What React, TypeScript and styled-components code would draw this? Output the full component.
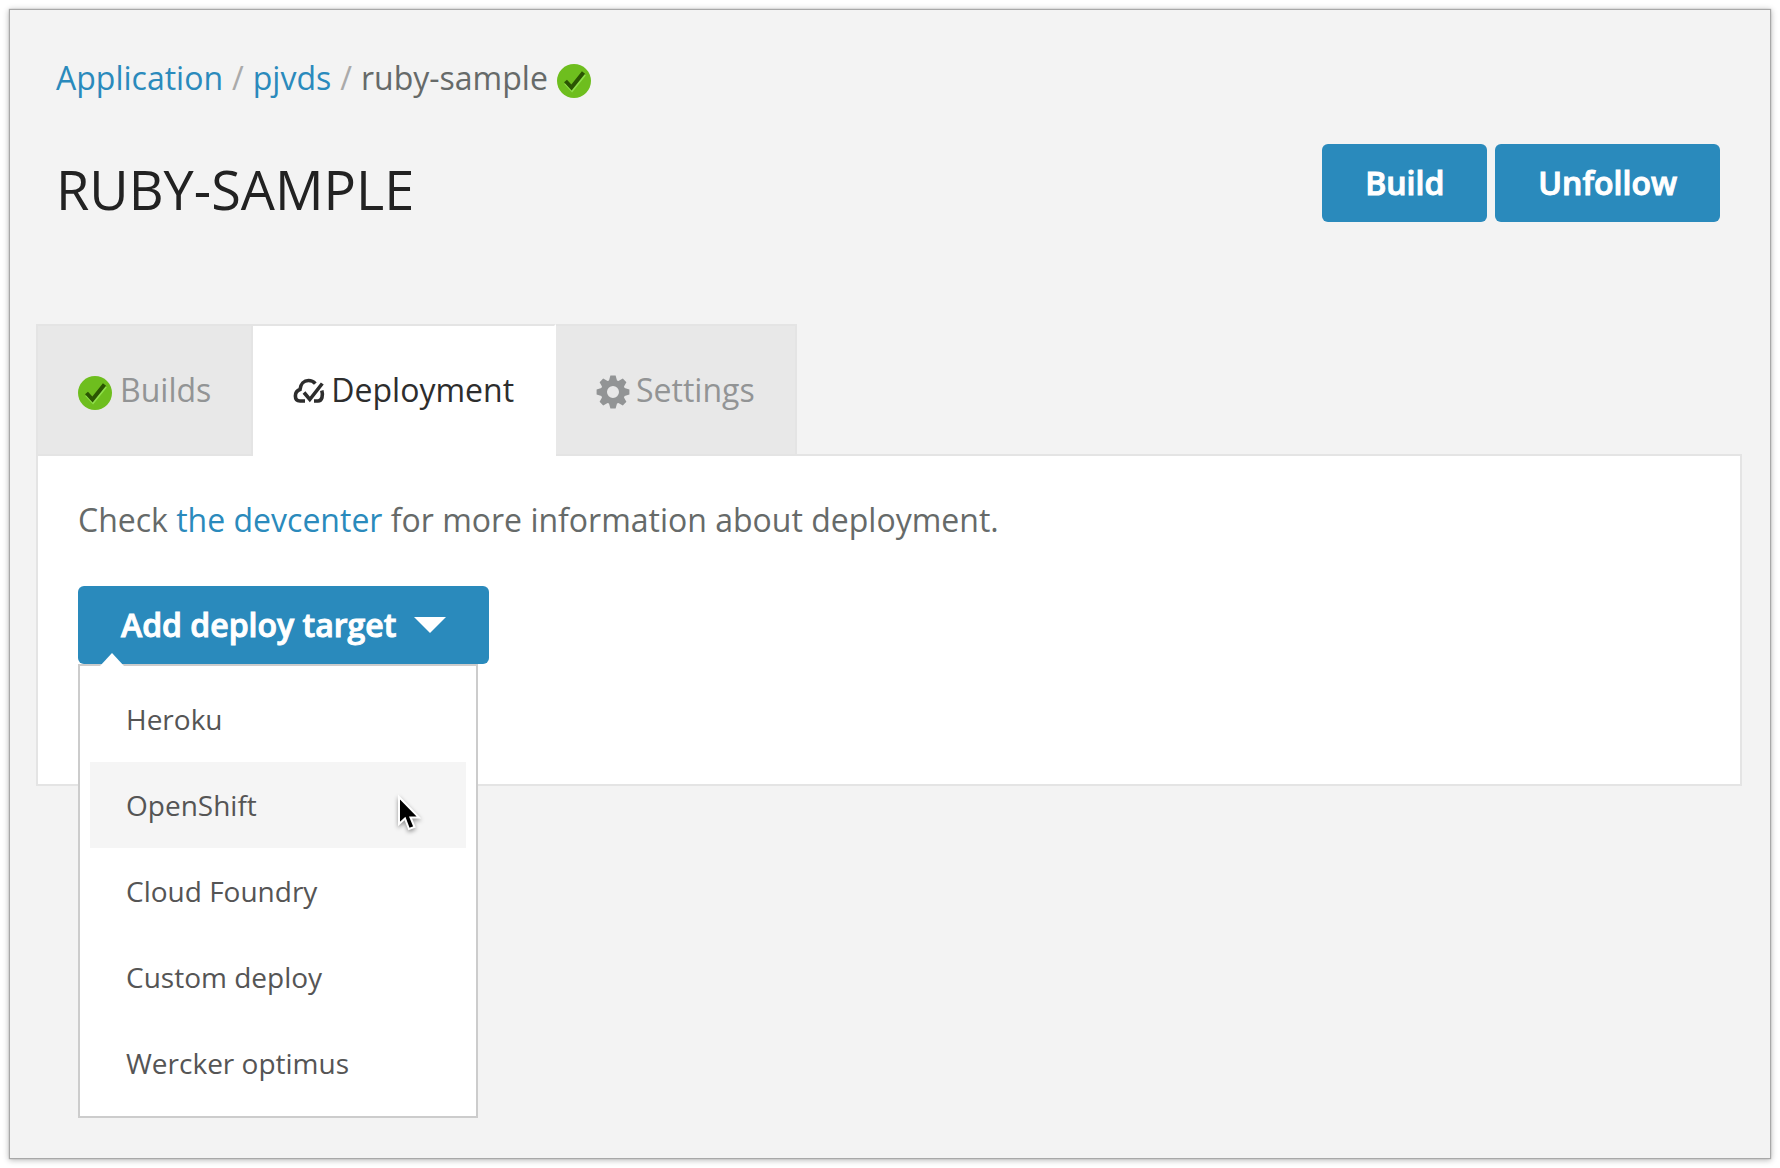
import React, { useState } from 'react';
import styled, { createGlobalStyle } from 'styled-components';

const GlobalStyle = createGlobalStyle`
  *, *::before, *::after { box-sizing: border-box; }
  body {
    margin: 0;
    background: #fff;
    color: #666a69;
    font: 32px/48px 'Open Sans', 'Noto Sans', sans-serif;
  }
  ul, ol { list-style: none; margin: 0; padding: 0; }
  a { color: #2a8abc; text-decoration: none; }
`;

const Page = styled.div`
  min-height: 100vh;
  padding: 10px;
  display: flex;
`;

const Sheet = styled.main`
  flex: 1;
  padding: 44px 28px 40px 26px;
  background: #f3f3f3;
  box-shadow: 0 0 1px 1px #a8a8a8, 0 1px 6px 1px rgba(0, 0, 0, 0.3);
`;

const Breadcrumb = styled.ol`
  display: flex;
  align-items: center;
  gap: 9px;
  padding: 0 20px;
  margin-bottom: 42px;
`;

const Crumb = styled.li`
  display: flex;
  align-items: center;
  gap: 9px;

  & + &::before {
    content: '/';
    color: #aaa;
  }
`;

const Header = styled.header`
  display: flex;
  justify-content: space-between;
  align-items: flex-start;
  padding: 0 22px 0 20px;
  margin-bottom: 90px;
`;

const Title = styled.h1`
  margin: 0;
  font-size: 54px;
  line-height: 90px;
  font-weight: 400;
  color: #222;
  text-transform: uppercase;
`;

const Actions = styled.div`
  display: flex;
  gap: 8px;
`;

const Button = styled.button`
  display: inline-flex;
  align-items: center;
  gap: 18px;
  height: 78px;
  padding: 0 43px;
  border: 0;
  border-radius: 6px;
  background: #2a8abc;
  color: #fff;
  font: inherit;
  font-weight: 600;
  -webkit-text-stroke: 1px #fff;
  cursor: pointer;
`;

const TabList = styled.div`
  display: flex;
  position: relative;
  z-index: 1;
`;

const Tab = styled.button<{ $active: boolean }>`
  display: flex;
  align-items: center;
  gap: 6px;
  height: 132px;
  margin-bottom: -2px;
  padding: 0 40px;
  border: 2px solid #e4e4e4;
  border-left-width: 0;
  background: #e8e8e8;
  color: #929495;
  font: inherit;
  cursor: pointer;

  &:first-child { border-left-width: 2px; }

  ${({ $active }) => $active && `
    border-right-color: #fff;
    border-bottom-color: #fff;
    background: #fff;
    color: #2d2d2d;
  `}
`;

const IconSlot = styled.span`
  display: flex;
  padding-top: 4px;
`;

const Panel = styled.section`
  padding: 40px 40px 120px;
  border: 2px solid #e4e4e4;
  background: #fff;
`;

const Intro = styled.p`
  margin: 0 0 42px;
`;

const Dropdown = styled.div`
  position: relative;
  display: flex;
  width: fit-content;
`;

const Menu = styled.ul`
  position: absolute;
  z-index: 2;
  top: 100%;
  left: 0;
  width: 400px;
  padding: 10px;
  border: 2px solid #ccc;
  background: #fff;
`;

const Notch = styled.svg`
  position: absolute;
  left: 20px;
  bottom: 100%;
`;

const MenuItem = styled.button<{ $hover: boolean }>`
  display: block;
  width: 100%;
  height: 86px;
  padding: 0 36px;
  border: 0;
  background: ${({ $hover }) => ($hover ? '#f5f5f5' : 'transparent')};
  color: #555;
  font: inherit;
  font-size: 28px;
  text-align: left;
  cursor: pointer;
`;

const Pointer = styled.svg`
  position: absolute;
  left: 314px;
  top: 128px;
  pointer-events: none;
  filter: drop-shadow(0 2px 2px rgba(0, 0, 0, 0.4));
`;

const PassedIcon = () => (
  <svg width="36" height="36" viewBox="0 -2 36 36" aria-hidden="true">
    <circle cx="17" cy="17" r="17" fill="#6ebe1e" />
    <path d="M8.5 18.8L15 26L27.5 10.5" fill="none" stroke="#8fe04a" strokeWidth="3.4" />
    <path d="M8.5 17L14.5 23.5L26.5 8.5" fill="none" stroke="#2b5503" strokeWidth="4" />
  </svg>
);

const DeployIcon = () => (
  <svg width="32" height="34" viewBox="0 0 32 34" fill="none" stroke="currentColor" strokeWidth="3.6" aria-hidden="true">
    <path d="M12 26H7C4 26 2.4 24 2.4 21C2.4 18 4 15.5 7 14.5C7.5 9 11 5.5 15.5 5.5C18.5 5.5 20.5 6.5 22.3 8.6" />
    <path d="M11 17.5L16.8 24.5L29.3 8.5" />
    <path d="M28.8 15.5C30.3 20.5 29 26 25 26H21" />
  </svg>
);

const GearIcon = () => (
  <svg width="34" height="34" viewBox="-17 -17 34 34" fill="currentColor" aria-hidden="true">
    <path
      fillRule="evenodd"
      d="M-2.6 -16.4H2.6L4 -11.6L5.4 -11L9.8 -13.4L13.4 -9.8L11 -5.4L11.6 -4L16.4 -2.6V2.6L11.6 4L11 5.4L13.4 9.8L9.8 13.4L5.4 11L4 11.6L2.6 16.4H-2.6L-4 11.6L-5.4 11L-9.8 13.4L-13.4 9.8L-11 5.4L-11.6 4L-16.4 2.6V-2.6L-11.6 -4L-11 -5.4L-13.4 -9.8L-9.8 -13.4L-5.4 -11L-4 -11.6ZM0 -6A6 6 0 1 0 0 6A6 6 0 1 0 0 -6Z"
    />
  </svg>
);

const TABS = [
  { name: 'Builds', Icon: PassedIcon },
  { name: 'Deployment', Icon: DeployIcon },
  { name: 'Settings', Icon: GearIcon },
];

const TARGETS = ['Heroku', 'OpenShift', 'Cloud Foundry', 'Custom deploy', 'Wercker optimus'];

export default function App() {
  const [tab, setTab] = useState('Deployment');
  const [open, setOpen] = useState(true);
  const [hovered, setHovered] = useState('OpenShift');

  return (
    <Page>
      <GlobalStyle />
      <Sheet>
        <nav aria-label="Breadcrumb">
          <Breadcrumb>
            <Crumb><a href="#application">Application</a></Crumb>
            <Crumb><a href="#pjvds">pjvds</a></Crumb>
            <Crumb>
              ruby-sample
              <IconSlot><PassedIcon /></IconSlot>
            </Crumb>
          </Breadcrumb>
        </nav>

        <Header>
          <Title>ruby-sample</Title>
          <Actions>
            <Button type="button">Build</Button>
            <Button type="button">Unfollow</Button>
          </Actions>
        </Header>

        <TabList role="tablist">
          {TABS.map(({ name, Icon }) => (
            <Tab
              key={name}
              type="button"
              role="tab"
              aria-selected={tab === name}
              $active={tab === name}
              onClick={() => setTab(name)}
            >
              <IconSlot><Icon /></IconSlot>
              {name}
            </Tab>
          ))}
        </TabList>

        <Panel role="tabpanel">
          <Intro>
            Check <a href="#devcenter">the devcenter</a> for more information about deployment.
          </Intro>
          <Dropdown>
            <Button type="button" aria-expanded={open} onClick={() => setOpen(!open)}>
              Add deploy target
              <svg width="32" height="16" viewBox="0 0 32 16" fill="#fff" aria-hidden="true">
                <path d="M0 0H32L16 16Z" />
              </svg>
            </Button>
            {open && (
              <Menu>
                <Notch width="24" height="14" viewBox="0 0 24 14" aria-hidden="true">
                  <path d="M0 14L12 1L24 14Z" fill="#fff" />
                </Notch>
                {TARGETS.map((name) => (
                  <li key={name}>
                    <MenuItem
                      type="button"
                      $hover={hovered === name}
                      onMouseEnter={() => setHovered(name)}
                    >
                      {name}
                    </MenuItem>
                  </li>
                ))}
                <Pointer width="28" height="40" viewBox="0 0 28 40" aria-hidden="true">
                  <path
                    d="M5 3V30L11 24.5L15 35L20.5 33L16.5 23.5H25Z"
                    fill="#000"
                    stroke="#fff"
                    strokeWidth="2"
                  />
                </Pointer>
              </Menu>
            )}
          </Dropdown>
        </Panel>
      </Sheet>
    </Page>
  );
}
